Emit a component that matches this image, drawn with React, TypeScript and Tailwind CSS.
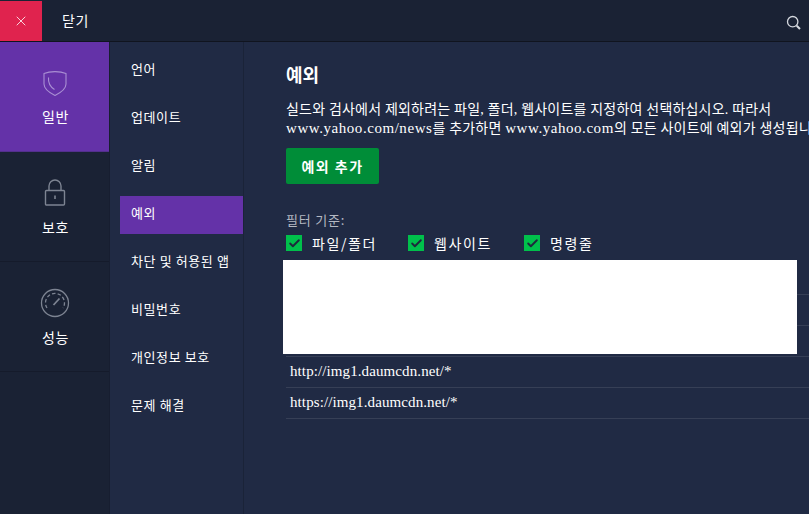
import { Check, X } from "lucide-react"

const font = "font-['Liberation_Serif','Noto_Sans_CJK_KR',serif]"
const uiFont = "font-['Noto_Sans_CJK_KR','Noto_Sans',sans-serif]"
const latin = "text-[15px] tracking-[0.55px]"

const subItems = ["언어", "업데이트", "알림", "예외", "차단 및 허용된 앱", "비밀번호", "개인정보 보호", "문제 해결"]

const ShieldIcon = () => (
  <svg width="24" height="26" viewBox="0 0 24 26" fill="none" stroke="#a98fd3" strokeWidth="1.1">
    <path d="M1 3.5C7 1 17 1 23 3.5V14C23 19 17 23 12 25.5C7 23 1 19 1 14Z" />
    <path d="M5.5 7.5C5 13 7.5 17 11.5 19.5" />
  </svg>
)

const LockIcon = () => (
  <svg width="22" height="28" viewBox="0 0 22 28" fill="none" stroke="#7d8492" strokeWidth="1.4">
    <rect x="1.5" y="11.5" width="19" height="14.5" rx="1" />
    <path d="M5 11.5V7a6 6 0 0 1 12 0v4.5" />
    <path d="M11 16.5v3.5" strokeWidth="1.6" />
  </svg>
)

const GaugeIcon = () => (
  <svg width="30" height="30" viewBox="0 0 30 30" fill="none" stroke="#7d8492" strokeWidth="1.3">
    <circle cx="15" cy="15" r="13.5" />
    <path d="M7 20A9.5 9.5 0 1 1 23 20" strokeDasharray="3.5 2.2" />
    <path d="M13.5 17L19.5 10.5" strokeWidth="1.8" />
  </svg>
)

const SearchIcon = () => (
  <svg width="16" height="16" viewBox="0 0 16 16" fill="none" stroke="#d5d8de">
    <circle cx="6.7" cy="6.7" r="5.2" strokeWidth="1.3" />
    <path d="M10.7 10.7L14 14" strokeWidth="2" />
  </svg>
)

const App = () => {
  return (
    <div className={`w-[809px] h-[514px] overflow-hidden bg-[#202a44] text-white flex flex-col ${uiFont}`}>
      {/* Top bar */}
      <div className="h-[42px] shrink-0 bg-[#1a2234] border-b border-[#10141f] pt-px flex items-stretch">
        <div className="w-[42px] bg-[#e0234e] flex items-center justify-center">
          <X size={16} strokeWidth={1.2} />
        </div>
        <span className="ml-5 mt-[9px] text-[14px] leading-5 tracking-[0.5px]">닫기</span>
        <div className="ml-auto mr-[7px] mt-[14px]">
          <SearchIcon />
        </div>
      </div>

      <div className="flex-1 flex min-h-0">
        {/* Main sidebar */}
        <div className="w-[110px] shrink-0 bg-[#1a2234] border-r border-[#171e30] flex flex-col">
          <div className="h-[110px] bg-[#6432a8] border-b border-[#53308c] flex flex-col items-center pt-7 gap-[10px]">
            <ShieldIcon />
            <span className="ml-[2px] text-[14px] leading-5 tracking-[0.5px]">일반</span>
          </div>
          <div className="h-[110px] border-b border-[#151b2b] flex flex-col items-center pt-[27px] gap-[10px]">
            <LockIcon />
            <span className="ml-[2px] text-[14px] leading-5 tracking-[0.5px]">보호</span>
          </div>
          <div className="h-[110px] border-b border-[#151b2b] flex flex-col items-center pt-[26px] gap-[9px]">
            <GaugeIcon />
            <span className="ml-[2px] text-[14px] leading-5 tracking-[0.5px]">성능</span>
          </div>
        </div>

        {/* Sub menu */}
        <div className="w-[134px] shrink-0 border-r border-[#1a2338] pl-[10px] pt-[10px] flex flex-col gap-[10px]">
          {subItems.map((item) => (
            <div
              key={item}
              className={`h-[38px] w-[123px] pl-[11px] pb-[4px] flex items-center text-[13px] tracking-[0.6px] whitespace-nowrap ${item === "예외" ? "bg-[#6432a8]" : ""}`}
            >
              {item}
            </div>
          ))}
        </div>

        {/* Content */}
        <div className="flex-1 min-w-0 relative pl-[42px] pt-[20px]">
          <h1 className="text-[18px] leading-6 font-bold">예외</h1>
          <p className={`mt-[14px] text-[14px] leading-[19px] tracking-[0.2px] whitespace-nowrap ${font}`}>
            실드와 검사에서 제외하려는 파일, 폴더, 웹사이트를 지정하여 선택하십시오. 따라서
            <br />
            <span className={latin}>www.yahoo.com/news</span>를 추가하면 <span className={latin}>www.yahoo.com</span>의 모든 사이트에 예외가 생성됩니다.
          </p>
          <button className="mt-[10px] w-[93px] h-[36px] rounded-[2px] bg-[#008d38] text-[14px] tracking-[1.5px] font-bold flex items-center justify-center">
            예외 추가
          </button>

          <div className="mt-[27px] text-[13px] leading-[18px] tracking-[0.8px] text-[#b4b8c2]">필터 기준:</div>
          <div className="mt-[4px] flex items-center text-[14px] leading-5">
            <Filter label="파일/폴더" className="w-[122px]" />
            <Filter label="웹사이트" className="w-[116px]" />
            <Filter label="명령줄" className="" />
          </div>

          {/* Exception rows */}
          <div className={`mt-[11px] text-[15px] tracking-[0.1px] ${font}`}>
            {["", "", "", "http://img1.daumcdn.net/*", "https://img1.daumcdn.net/*"].map((row, i) => (
              <div key={i} className="h-[31px] border-b border-[#363f56] pl-[4px] pb-[2px] flex items-center">
                {row}
              </div>
            ))}
          </div>

          {/* Redacted block over the rows */}
          <div className="absolute left-[39px] top-[218px] w-[514px] h-[94px] bg-white" />
        </div>
      </div>
    </div>
  )
}

const Filter = ({ label, className }: { label: string; className: string }) => (
  <div className={`flex items-center gap-[10px] ${className}`}>
    <span className="w-4 h-4 bg-[#00c04b] flex items-center justify-center">
      <Check size={13} strokeWidth={3.5} className="text-[#1d2a3c]" />
    </span>
    <span className="tracking-[1.6px]">{label}</span>
  </div>
)

export default App
